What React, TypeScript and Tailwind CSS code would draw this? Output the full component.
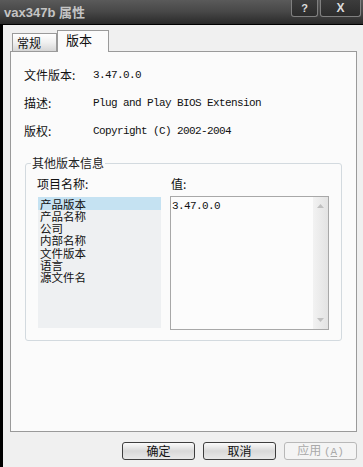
import React from "react";

const cjk = "font-['Noto_Sans_CJK_SC',sans-serif]";
const mono = "font-['Liberation_Mono','Noto_Sans_CJK_SC',monospace] text-[11px] tracking-[-0.6px]";

function Btn({ label, disabled }: { label: React.ReactNode; disabled?: boolean }) {
  return (
    <div
      className={
        "w-[73px] h-[18px] rounded-[3px] border flex items-center justify-center text-[12px] leading-[16px] " +
        (disabled
          ? "border-[#b8b8b8] bg-[#f4f4f4] text-[#a9a9a9]"
          : "border-[#3e3e3e] bg-gradient-to-b from-[#fbfbfb] via-[#d9d9d9] to-[#e9e9e9] text-[#111]")
      }
    >
      {label}
    </div>
  );
}

export default function App() {
  const items = ["产品版本", "产品名称", "公司", "内部名称", "文件版本", "语言", "源文件名"];
  return (
    <div className={"w-[363px] h-[467px] flex flex-col overflow-hidden text-[12px] text-[#111] " + cjk}>
      {/* Title bar */}
      <div className="h-[25px] relative bg-gradient-to-b from-[#5a5a5a] via-[#474747] to-[#2a2a2a] border-b border-black flex items-center">
        <span className="ml-[4px] mt-[2px] text-[13px] font-bold text-[#c4c4c4] font-['Liberation_Sans','Noto_Sans_CJK_SC',sans-serif]">
          vax347b 属性
        </span>
        <div className="absolute top-0 left-[291px] flex gap-[2px]">
          <div className="w-[27px] h-[17px] border border-t-0 border-[#808080] rounded-b-[3px] bg-gradient-to-b from-[#3c3c3c] to-[#2c2c2c] flex items-center justify-center text-[11px] font-bold text-[#dcdcdc] font-['Liberation_Sans',sans-serif]">
            ?
          </div>
          <div className="w-[41px] h-[17px] border border-t-0 border-[#808080] rounded-b-[3px] bg-gradient-to-b from-[#3c3c3c] to-[#2c2c2c] flex items-center justify-center text-[12px] font-bold text-[#dcdcdc] font-['Liberation_Sans',sans-serif]">
            X
          </div>
        </div>
      </div>

      <div className="flex flex-1">
        <div className="w-[3px] bg-black" />
        <div className="flex-1 bg-[#f0f0f0] flex flex-col">
          {/* Tabs */}
          <div className="h-[26px] pl-[9px] flex items-end">
            <div className="w-[45px] h-[18px] border border-b-0 border-[#9a9a9a] bg-gradient-to-b from-[#ffffff] via-[#f0f0f0] to-[#d6d6d6] flex items-center pl-[4px] leading-[16px]">
              常规
            </div>
            <div className="w-[52px] h-[22px] -mb-[1px] relative z-10 border border-b-0 border-[#9a9a9a] bg-[#fbfbfb] flex items-start pt-[1px] pl-[8px] leading-[16px] text-[13px]">
              版本
            </div>
          </div>

          {/* Panel */}
          <div className="ml-[7px] w-[347px] h-[381px] border border-[#9a9a9a] bg-[#fbfbfb] flex flex-col">
            <div className="pt-[15px] pl-[13px] flex flex-col gap-[12px]">
              {[
                ["文件版本:", "3.47.0.0"],
                ["描述:", "Plug and Play BIOS Extension"],
                ["版权:", "Copyright (C) 2002-2004"],
              ].map(([k, v]) => (
                <div key={k} className="flex h-[16px] items-center leading-[16px]">
                  <span className="w-[69px]">{k}</span>
                  <span className={mono + " whitespace-pre"}>{v}</span>
                </div>
              ))}
            </div>

            {/* Group box */}
            <div className="relative ml-[14px] mt-[24px] w-[317px] h-[178px] border border-[#d3dadf] rounded-[3px]">
              <span className="absolute left-[5px] -top-[9px] px-[1px] leading-[16px] bg-[#fbfbfb] text-[#222]">
                其他版本信息
              </span>
              <div className="flex pt-[12px] pl-[11px]">
                <div className="w-[124px] flex flex-col">
                  <div className="h-[16px] leading-[16px]">项目名称:</div>
                  <div className="mt-[5px] ml-[1px] h-[131px] bg-[#eef0f2] flex flex-col">
                    {items.map((it, i) => (
                      <div
                        key={it}
                        className={
                          "leading-[12px] text-[11.5px] pl-[2px] " +
                          (i === 0 ? "bg-[#c5e2f2] h-[13px] pt-[1px]" : "h-[12.2px]")
                        }
                      >
                        {it}
                      </div>
                    ))}
                  </div>
                </div>
                <div className="ml-[9px] w-[159px] flex flex-col">
                  <div className="h-[16px] leading-[16px] pl-[1px]">值:</div>
                  <div className="mt-[4px] h-[134px] border border-[#a8a8a8] bg-[#fcfcfc] flex">
                    <div className={"flex-1 pl-[1px] pt-[3px] leading-[12px] " + mono}>3.47.0.0</div>
                    <div className="w-[15px] bg-gradient-to-r from-[#f2f2f2] to-[#e3e3e3] flex flex-col items-center justify-between py-[7px]">
                      <svg width="7" height="4" viewBox="0 0 7 4"><path d="M0 4 L3.5 0 L7 4 Z" fill="#c0c0c0" /></svg>
                      <svg width="7" height="4" viewBox="0 0 7 4"><path d="M0 0 L3.5 4 L7 0 Z" fill="#c0c0c0" /></svg>
                    </div>
                  </div>
                </div>
              </div>
            </div>
          </div>

          {/* Buttons */}
          <div className="mt-[10px] ml-[119px] flex gap-[8px]">
            <Btn label="确定" />
            <Btn label="取消" />
            <Btn
              disabled
              label={
                <span>
                  应用 <span className="font-['Liberation_Mono',monospace] text-[11px]">(<span className="underline">A</span>)</span>
                </span>
              }
            />
          </div>
        </div>
      </div>
    </div>
  );
}
